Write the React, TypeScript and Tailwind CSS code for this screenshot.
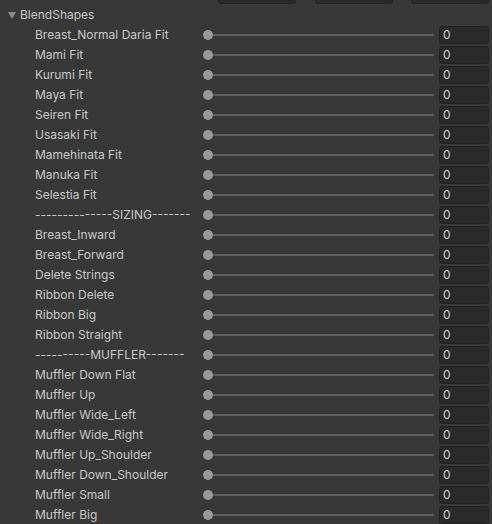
const rows = [
  'Breast_Normal Daria Fit',
  'Mami Fit',
  'Kurumi Fit',
  'Maya Fit',
  'Seiren Fit',
  'Usasaki Fit',
  'Mamehinata Fit',
  'Manuka Fit',
  'Selestia Fit',
  '--------------SIZING-------',
  'Breast_Inward',
  'Breast_Forward',
  'Delete Strings',
  'Ribbon Delete',
  'Ribbon Big',
  'Ribbon Straight',
  '----------MUFFLER-------',
  'Muffler Down Flat',
  'Muffler Up',
  'Muffler Wide_Left',
  'Muffler Wide_Right',
  'Muffler Up_Shoulder',
  'Muffler Down_Shoulder',
  'Muffler Small',
  'Muffler Big',
]

function Row({ label }: { label: string }) {
  return (
    <div className="flex items-center h-5 shrink-0">
      <div className="w-[203px] pl-[35px] whitespace-nowrap leading-[20px]">{label}</div>
      <div className="relative w-[231px] h-full">
        <div className="absolute left-[5px] right-0 top-[9px] h-[2px] bg-[#5e5e5e]" />
        <div className="absolute left-0 top-[5px] w-[10px] h-[10px] rounded-full bg-[#999999]" />
      </div>
      <div className="ml-[5px] w-[50px] h-[18px] rounded-[3px] bg-[#2a2a2a] border border-[#212121] pl-[3px] flex items-center text-[#d2d2d2] leading-[16px]">
        0
      </div>
    </div>
  )
}

export default function App() {
  return (
    <div className="w-[492px] h-[524px] overflow-hidden bg-[#383838] text-[#c8c8c8] text-[12px] flex flex-col" style={{ fontFamily: 'Inter, "Noto Sans", sans-serif' }}>
      {/* cut-off toolbar buttons */}
      <div className="flex h-[5px] shrink-0">
        <div className="ml-[218px] w-[78px] -mt-[4px] h-[8px] rounded-b-[3px] bg-[#2a2a2a] border border-[#242424]" />
        <div className="ml-[19px] w-[78px] -mt-[4px] h-[8px] rounded-b-[3px] bg-[#2a2a2a] border border-[#242424]" />
        <div className="ml-[18px] w-[78px] -mt-[4px] h-[8px] rounded-b-[3px] bg-[#2a2a2a] border border-[#242424]" />
      </div>

      {/* foldout header */}
      <div className="flex items-center h-[20px] pl-[8px] shrink-0 leading-[20px]">
        <svg width="8" height="7" viewBox="0 0 8 7" className="mr-[4px]">
          <path d="M0 0 H8 L4 7 Z" fill="#8c8c8c" />
        </svg>
        <span>BlendShapes</span>
      </div>

      {rows.map((r, i) => (
        <Row key={i} label={r} />
      ))}
    </div>
  )
}
